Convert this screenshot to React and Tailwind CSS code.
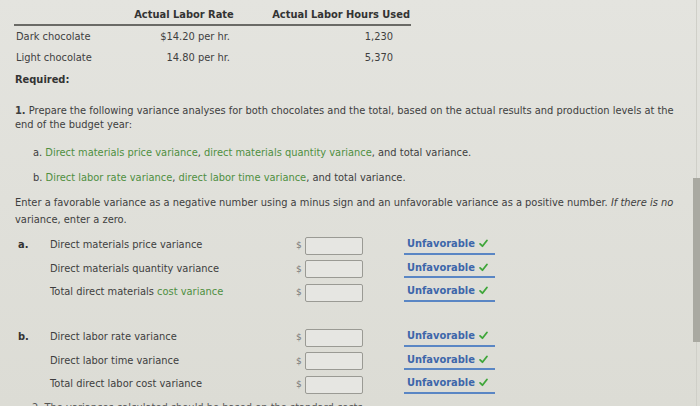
import React from "react";

const G = ({ children }) => <span className="text-[#4f8f3f]">{children}</span>;

function Check() {
  return (
    <svg width="9" height="9" viewBox="0 0 10 10" className="inline-block ml-[4px] -mt-[2px]">
      <path d="M1.2 5.4 L3.8 8 L8.8 1.6" fill="none" stroke="#3fa63a" strokeWidth="2" strokeLinecap="round" strokeLinejoin="round" />
    </svg>
  );
}

function Row({ tag, label }) {
  return (
    <div className="flex items-center h-[23.5px]">
      <div className="w-[32px] font-bold text-[#333]">{tag}</div>
      <div className="w-[246px]">{label}</div>
      <div className="w-[9px] text-[#777] text-[9px]">$</div>
      <div className="w-[58px] h-[18px] border border-[#9a9a94] rounded-[2px] bg-[#e6e6e2]"></div>
      <div className="ml-[41px] w-[91px] border-b-2 border-[#5a86c4] h-[18px] flex items-center pl-[3px] font-bold text-[#3d66aa]">
        Unfavorable<Check />
      </div>
    </div>
  );
}

export default function App() {
  return (
    <div
      className="relative w-[700px] h-[406px] overflow-hidden bg-gradient-to-b from-[#e4e4df] to-[#dcdcd5] text-[#3e3e3e] text-[9.9px]"
      style={{ fontFamily: '"DejaVu Sans", Verdana, sans-serif' }}
    >
      <div className="pl-[14px]">
        {/* table */}
        <div className="w-[397px]">
          <div className="flex h-[26px] border-b-2 border-[#6a6a66] items-end pb-[1px] font-bold text-[#333]">
            <div className="w-[120px]"></div>
            <div className="w-[100px] text-center">Actual Labor Rate</div>
            <div className="flex-1 text-right pr-[1px]">Actual Labor Hours Used</div>
          </div>
          <div className="flex h-[21px] items-center pt-[1px]">
            <div className="w-[121px] pl-[2px]">Dark chocolate</div>
            <div className="w-[95px] text-right">$14.20 per hr.</div>
            <div className="flex-1 text-right pr-[18px]">1,230</div>
          </div>
          <div className="flex h-[22px] items-center pt-[1px]">
            <div className="w-[121px] pl-[2px]">Light chocolate</div>
            <div className="w-[95px] text-right">14.80 per hr.</div>
            <div className="flex-1 text-right pr-[18px]">5,370</div>
          </div>
        </div>
        <div className="h-[22px] flex items-center font-bold text-[#333] pl-[1px]">Required:</div>

        <div className="mt-[13px] leading-[14px] pl-[1px] pr-[20px]">
          <span className="font-bold">1.</span> Prepare the following variance analyses for both chocolates and the total, based on the actual results and production levels at the end of the budget year:
        </div>

        <div className="mt-[13px] leading-[15px] pl-[19px]">
          a. <G>Direct materials price variance</G>, <G>direct materials quantity variance</G>, and total variance.
        </div>
        <div className="mt-[10px] leading-[15px] pl-[19px]">
          b. <G>Direct labor rate variance</G>, <G>direct labor time variance</G>, and total variance.
        </div>

        <div className="mt-[9px] leading-[17px] pl-[1px] pr-[24px]">
          Enter a favorable variance as a negative number using a minus sign and an unfavorable variance as a positive number. <span className="italic">If there is no</span> variance, enter a zero.
        </div>
      </div>

      <div className="pl-[18px] mt-[6px]">
        <Row tag="a." label="Direct materials price variance" />
        <Row tag="" label="Direct materials quantity variance" />
        <Row tag="" label={<>Total direct materials <G>cost variance</G></>} />
        <div className="h-[21.5px]"></div>
        <Row tag="b." label="Direct labor rate variance" />
        <Row tag="" label="Direct labor time variance" />
        <Row tag="" label="Total direct labor cost variance" />
        <div className="mt-[5px] pl-[14px] text-[#555] leading-[12px]">2. The variances calculated should be based on the standard costs.</div>
      </div>

      {/* scrollbar */}
      <div className="absolute right-[3px] top-0 bottom-0 w-px bg-[#cfcfc8]"></div>
      <div className="absolute right-0 top-[178px] h-[164px] w-[7px] bg-[#a9a9a1]"></div>
    </div>
  );
}
